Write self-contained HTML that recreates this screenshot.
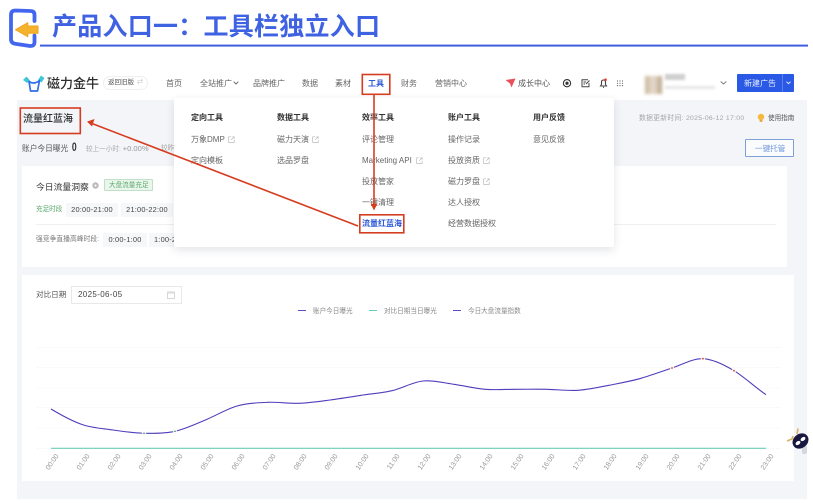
<!DOCTYPE html>
<html lang="zh">
<head>
<meta charset="utf-8">
<title>产品入口一：工具栏独立入口</title>
<style>
html,body{margin:0;padding:0;background:#fff}
#p{position:relative;width:813px;height:503px;overflow:hidden;background:#fff;font-family:"Liberation Sans","Noto Sans CJK SC",sans-serif;color:#444;filter:blur(.35px)}
#p>*{position:absolute}
.t{white-space:nowrap;line-height:12px;height:12px;font-size:8px;margin-top:1px}
.h{font-weight:700;color:#333}
.g{color:#666}
.pill{background:#f6f7f9;color:#444;font-size:7.4px;line-height:14px;height:14px;text-align:center;letter-spacing:.2px;border-radius:1px}
svg{overflow:visible}
.x{width:7px;height:7px}
</style>
</head>
<body>
<div id="p">
<svg style="width:0;height:0;left:0;top:0"><defs><symbol id="ext" viewBox="0 0 7 7"><path d="M3.2 .8H.6V6.4H6.2V3.8M3.2 3.8L6.2 .8M4.4 .8H6.2V2.6" fill="none" stroke="#bbb" stroke-width=".7"/></symbol></defs></svg>
<!-- header banner -->
<svg style="left:0;top:0" width="813" height="60" viewBox="0 0 813 60">
<path d="M34.5 21 V15 Q34.5 11 30.5 11 L15.5 10.5 Q11 10.5 11 15 L11 39 Q11 43 15 43.7 L30 46 Q34.5 46.3 34.5 42 V35.5" fill="none" stroke="#4366ee" stroke-width="3.8" stroke-linejoin="round" stroke-linecap="round"/>
<path d="M15.5 29.7 L27.8 22.7 L27.8 26 L38 26 L38 33.3 L27.8 33.3 L27.8 36.7 Z" fill="#f5b22c" stroke="#f0a41e" stroke-width="1" stroke-linejoin="round"/>
<rect x="40" y="44.6" width="768" height="2" fill="#3f5ddf"/>
</svg>
<div style="left:52px;top:11px;font-size:25px;line-height:32px;font-weight:700;color:#3f62e2;letter-spacing:.25px;white-space:nowrap">产品入口一：工具栏独立入口</div>

<!-- grey page area -->
<div style="left:17px;top:100px;width:790px;height:399px;background:#f3f5f8"></div>

<!-- nav logo -->
<svg style="left:22px;top:74px" width="24" height="20" viewBox="0 0 24 20">
<path d="M1 6 L4.5 2.5 L8 6.5 L5 9 Z" fill="#3fc7d8"/>
<path d="M22.5 4 L19 1.5 L16 6 L19.5 8.5 Z" fill="#3fc7d8"/>
<path d="M7 7.5 Q12 11 17.5 6.5 L15.5 17 L8.5 17 Z" fill="none" stroke="#2f6fe8" stroke-width="1.7" stroke-linejoin="round"/>
</svg>
<div class="t" style="left:47px;top:75px;font-size:13px;line-height:15px;height:15px;font-weight:500;color:#2d2d2d">磁力金牛</div>
<div style="left:103px;top:76px;width:45px;height:14px;border:.7px solid #efefef;border-radius:8px;box-sizing:border-box"></div>
<div class="t" style="left:108px;top:76px;font-size:6.5px;color:#555">返回旧版</div>
<div class="t" style="left:137px;top:76px;font-size:6px;color:#bbb">⇄</div>

<div class="t g" style="left:166px;top:77px">首页</div>
<div class="t g" style="left:200px;top:77px">全站推广</div>
<svg style="left:233px;top:81px" width="6" height="4"><path d="M.7 .7 L3 3 L5.3 .7" fill="none" stroke="#555" stroke-width=".8"/></svg>
<div class="t g" style="left:253px;top:77px">品牌推广</div>
<div class="t g" style="left:302px;top:77px">数据</div>
<div class="t g" style="left:335px;top:77px">素材</div>
<div class="t" style="left:368px;top:77px;color:#2f5bd8;font-weight:700">工具</div>
<div class="t g" style="left:401px;top:77px">财务</div>
<div class="t g" style="left:435px;top:77px">营销中心</div>

<svg style="left:505px;top:78px" width="11" height="10" viewBox="0 0 11 10"><path d="M.5 2 L10.5 .5 L6.5 9.5 L5 5.5 Z" fill="#e8505b"/></svg>
<div class="t" style="left:518px;top:77px;color:#555">成长中心</div>
<svg style="left:562px;top:78px" width="64" height="11" viewBox="0 0 64 11">
<circle cx="5" cy="5.2" r="3.6" fill="none" stroke="#333" stroke-width="1.1"/><circle cx="5" cy="5.2" r="1.6" fill="#333"/>
<path d="M26 1.8 H20 V8.8 H27 V5 M24 6 L27.5 2.5 M21.5 4 H24 M21.5 6 H23" fill="none" stroke="#444" stroke-width="1"/>
<path d="M38.5 8 H44.5 L43.5 6.5 V4 Q43.5 2 41.5 2 Q39.5 2 39.5 4 V6.5 Z M41 9.3 H42" fill="none" stroke="#444" stroke-width="1.1"/><circle cx="43.5" cy="1.7" r="1.3" fill="#e8392f"/>
<g fill="#666"><circle cx="55.5" cy="3" r=".6"/><circle cx="58" cy="3" r=".6"/><circle cx="60.5" cy="3" r=".6"/><circle cx="55.5" cy="5.3" r=".6"/><circle cx="58" cy="5.3" r=".6"/><circle cx="60.5" cy="5.3" r=".6"/><circle cx="55.5" cy="7.6" r=".6"/><circle cx="58" cy="7.6" r=".6"/><circle cx="60.5" cy="7.6" r=".6"/></g>
</svg>
<!-- blurred account -->
<div style="left:645px;top:76px;width:17px;height:18px;background:linear-gradient(90deg,#c9b69b,#e6dccd 50%,#b9a386);filter:blur(1.6px)"></div>
<div style="left:665px;top:74px;width:20px;height:6px;background:#cfcfcf;filter:blur(1.4px)"></div>
<div style="left:665px;top:86px;width:50px;height:3px;background:#e6e6e6;filter:blur(1.2px)"></div>
<svg style="left:720px;top:81px" width="7" height="4"><path d="M.7 .5 L3.5 3 L6.3 .5" fill="none" stroke="#777" stroke-width=".9"/></svg>
<div style="left:737px;top:74px;width:57px;height:18px;background:#2a59e6;border-radius:1px"></div>
<div style="left:782px;top:74px;width:.7px;height:18px;background:#5a7eec"></div>
<div class="t" style="left:744px;top:77px;color:#e9efff">新建广告</div>
<svg style="left:786px;top:81px" width="5" height="4"><path d="M.5 .7 L2.5 2.7 L4.5 .7" fill="none" stroke="#fff" stroke-width=".8"/></svg>

<!-- page head -->
<div class="t" style="left:23px;top:112px;font-size:10px;line-height:13px;height:13px;font-weight:500;color:#2c2c2c">流量红蓝海</div>
<div class="t" style="left:22px;top:142px;font-size:7.7px;color:#555">账户今日曝光</div>
<div class="t" style="left:71px;top:139px;font-size:12px;line-height:14px;height:14px;font-weight:700;color:#333;transform:scaleX(.72)">0</div>
<div class="t" style="left:86px;top:142px;font-size:6.6px;color:#aaa">较上一小时: <span style="font-size:7.6px;color:#999">+0.00%</span></div>
<div class="t" style="left:161px;top:142px;font-size:6.6px;color:#aaa">较昨</div>
<div class="t" style="left:639px;top:112px;font-size:6.8px;color:#a5a5a5;letter-spacing:.3px">数据更新时间: 2025-06-12 17:00</div>
<svg style="left:757px;top:113px" width="8" height="10" viewBox="0 0 8 10"><circle cx="4" cy="4" r="3.2" fill="#f5b93c"/><rect x="2.6" y="7" width="2.8" height="1.8" fill="#e4a42c"/></svg>
<div class="t" style="left:768px;top:112px;font-size:6.6px;color:#555">使用指南</div>
<div style="left:745px;top:139px;width:49px;height:18px;box-sizing:border-box;border:.8px solid #7fa0d8;background:#fafbfd;border-radius:1px"></div>
<div class="t" style="left:755px;top:142px;color:#6f95dc;font-size:7.6px">一键托管</div>

<!-- card 1 -->
<div style="left:22px;top:166px;width:765px;height:101px;background:#fff"></div>
<div class="t" style="left:36px;top:180px;font-size:8.8px;color:#333">今日流量洞察</div>
<svg style="left:92px;top:182px" width="7" height="7"><circle cx="3.5" cy="3.5" r="3.2" fill="#bbb"/><circle cx="3.5" cy="3.5" r="1" fill="#fff"/></svg>
<div style="left:104px;top:179px;width:49px;height:12px;box-sizing:border-box;border:.7px solid #bfe0c6;background:#eaf6ec;border-radius:1px"></div>
<div class="t" style="left:109px;top:178.5px;font-size:6.6px;color:#5aa96c">大盘流量充足</div>
<div class="t" style="left:36px;top:203px;font-size:6.6px;color:#55a868">充足时段</div>
<div class="pill" style="left:66px;top:203px;width:52px">20:00-21:00</div>
<div class="pill" style="left:121px;top:203px;width:52px">21:00-22:00</div>
<div style="left:36px;top:224px;width:740px;height:.7px;background:#f0f0f0"></div>
<div class="t" style="left:36px;top:233px;font-size:6.8px;color:#777">强竞争直播高峰时段:</div>
<div class="pill" style="left:103px;top:233px;width:44px">0:00-1:00</div>
<div class="pill" style="left:149px;top:233px;width:44px;text-align:left;padding-left:5px;box-sizing:border-box">1:00-2:00</div>

<!-- card 2 -->
<div style="left:22px;top:275px;width:772px;height:206px;background:#fff"></div>
<div class="t" style="left:36px;top:288px;font-size:7.6px;color:#555">对比日期</div>
<div style="left:71px;top:286px;width:111px;height:18px;box-sizing:border-box;border:.8px solid #e8e8e8;background:#fff"></div>
<div class="t" style="left:78px;top:288px;font-size:8px;color:#444;letter-spacing:.35px">2025-06-05</div>
<svg style="left:167px;top:291px" width="8" height="8"><rect x=".5" y="1" width="7" height="6.5" fill="none" stroke="#ccc" stroke-width=".8"/><rect x=".5" y="1" width="7" height="1.6" fill="#ddd"/></svg>
<div style="left:298px;top:310px;width:8px;height:1.2px;background:#5a4fc0"></div>
<div class="t" style="left:313px;top:304.5px;font-size:6.6px;color:#888">账户今日曝光</div>
<div style="left:369px;top:310px;width:8px;height:1.2px;background:#66cdb8"></div>
<div class="t" style="left:384px;top:304.5px;font-size:6.6px;color:#888">对比日期当日曝光</div>
<div style="left:453px;top:310px;width:8px;height:1.2px;background:#5a4fc0"></div>
<div class="t" style="left:468px;top:304.5px;font-size:6.6px;color:#888">今日大盘流量指数</div>

<svg style="left:0;top:0" width="813" height="503" viewBox="0 0 813 503">
<g stroke="#f6f6f6" stroke-width=".8" stroke-dasharray="3 1">
<path d="M36 347.5H781M36 367.5H781M36 388H781M36 407.5H781M36 428H781M36 448.5H781"/>
</g>
<path d="M51 448.3H766" stroke="#6fcdb8" stroke-width="1.1"/>
<path fill="none" stroke="#4f3dbb" stroke-width="1.1" d="M51 409 C61 415 72 421 82 424.5 S103 428.5 113 430 S134 433.1 144 433.3 S165 433.6 175 431.3 S196 423.9 206 419.7 S227 408.9 237 406 S258 402.75 268 402.3 S289 403.7 299 403.3 S320 401.3 330 400 S351 396.9 361 395.3 S382 393.1 392 390.7 S413 382 423 381 S444 382.9 454 384.3 S475 388.5 485 389.3 S506 389.3 516 389.3 S537 389.1 547 389.3 S568 391 578 390.3 S599 387.3 609 385.3 S631 381.2 641 378.3 S662 371.3 672 368 S693 358.25 703 358.7 S724 364.7 734 370.7 S756 388 766 394.7"/>
<g fill="#fff" opacity=".85"><circle cx="144" cy="433.3" r="2.2"/><circle cx="175" cy="431.3" r="2.2"/><circle cx="672" cy="368" r="2.2"/><circle cx="703" cy="358.7" r="2.2"/><circle cx="734" cy="370.7" r="2.2"/></g>
<g fill="#3f8f5a"><circle cx="144" cy="433.3" r=".8"/><circle cx="175" cy="431.3" r=".8"/></g>
<g fill="#d9472f"><circle cx="672" cy="368" r=".9"/><circle cx="703" cy="358.7" r=".9"/><circle cx="734" cy="370.7" r=".9"/></g>
<g font-family="Liberation Sans, sans-serif" font-size="7" fill="#999" text-anchor="end">
<text transform="translate(59 456) rotate(-55)">00:00</text>
<text transform="translate(90 456) rotate(-55)">01:00</text>
<text transform="translate(121 456) rotate(-55)">02:00</text>
<text transform="translate(152 456) rotate(-55)">03:00</text>
<text transform="translate(183 456) rotate(-55)">04:00</text>
<text transform="translate(214 456) rotate(-55)">05:00</text>
<text transform="translate(245 456) rotate(-55)">06:00</text>
<text transform="translate(276 456) rotate(-55)">07:00</text>
<text transform="translate(307 456) rotate(-55)">08:00</text>
<text transform="translate(338 456) rotate(-55)">09:00</text>
<text transform="translate(369 456) rotate(-55)">10:00</text>
<text transform="translate(400 456) rotate(-55)">11:00</text>
<text transform="translate(431 456) rotate(-55)">12:00</text>
<text transform="translate(462 456) rotate(-55)">13:00</text>
<text transform="translate(493 456) rotate(-55)">14:00</text>
<text transform="translate(524 456) rotate(-55)">15:00</text>
<text transform="translate(555 456) rotate(-55)">16:00</text>
<text transform="translate(586 456) rotate(-55)">17:00</text>
<text transform="translate(617 456) rotate(-55)">18:00</text>
<text transform="translate(649 456) rotate(-55)">19:00</text>
<text transform="translate(680 456) rotate(-55)">20:00</text>
<text transform="translate(711 456) rotate(-55)">21:00</text>
<text transform="translate(742 456) rotate(-55)">22:00</text>
<text transform="translate(774 456) rotate(-55)">23:00</text>
</g>
</svg>

<!-- dropdown -->
<div style="left:174px;top:98px;width:440px;height:149px;background:#fff;border-radius:2px;box-shadow:0 3px 9px rgba(40,50,70,.13)"></div>
<div class="t h" style="left:191px;top:111px">定向工具</div>
<div class="t h" style="left:277px;top:111px">数据工具</div>
<div class="t h" style="left:362px;top:111px">效率工具</div>
<div class="t h" style="left:448px;top:111px">账户工具</div>
<div class="t h" style="left:533px;top:111px">用户反馈</div>
<div class="t g" style="left:191px;top:132.5px">万象DMP</div><svg class="x" style="left:227.5px;top:135.5px"><use href="#ext"/></svg>
<div class="t g" style="left:191px;top:153.5px">定向模板</div>
<div class="t g" style="left:277px;top:132.5px">磁力天演</div><svg class="x" style="left:311.5px;top:135.5px"><use href="#ext"/></svg>
<div class="t g" style="left:277px;top:153.5px">选品罗盘</div>
<div class="t g" style="left:362px;top:132.5px">评论管理</div>
<div class="t g" style="left:362px;top:153.5px">Marketing API</div><svg class="x" style="left:415.5px;top:156.5px"><use href="#ext"/></svg>
<div class="t g" style="left:362px;top:174.5px">投放管家</div>
<div class="t g" style="left:362px;top:195.5px">一键清理</div>
<div class="t" style="left:362px;top:216.5px;color:#2f5bd8;font-weight:700">流量红蓝海</div>
<div class="t g" style="left:448px;top:132.5px">操作记录</div>
<div class="t g" style="left:448px;top:153.5px">投放资质</div><svg class="x" style="left:482.5px;top:156.5px"><use href="#ext"/></svg>
<div class="t g" style="left:448px;top:174.5px">磁力罗盘</div><svg class="x" style="left:482.5px;top:177.5px"><use href="#ext"/></svg>
<div class="t g" style="left:448px;top:195.5px">达人授权</div>
<div class="t g" style="left:448px;top:216.5px">经营数据授权</div>
<div class="t g" style="left:533px;top:132.5px">意见反馈</div>

<!-- red annotations -->
<svg style="left:0;top:0" width="813" height="503" viewBox="0 0 813 503">
<g fill="none" stroke="#d63d20" stroke-width="1.6">
<rect x="362.3" y="74.5" width="27.5" height="19.8"/>
<rect x="20.3" y="108" width="60" height="25.5"/>
<rect x="359.8" y="214.8" width="44" height="18"/>
<path d="M374 94.5V205"/>
<path d="M358 226 L92 123.5"/>
</g>
<path d="M374 210.5 L370.6 203.8 L377.4 203.8 Z" fill="#d63d20"/>
<path d="M87 121.6 L94.5 119 L92 126.5 Z" fill="#d63d20"/>
</svg>

<!-- mascot -->
<svg style="left:785px;top:426px" width="24" height="32" viewBox="0 0 24 32">
<path d="M2 15 L7 13 L8 10 M13 2.5 L12 8" fill="none" stroke="#d9b36a" stroke-width="1.7"/>
<rect x="17" y="20" width="5" height="8" rx="2" fill="#d4d7dc"/>
<ellipse cx="15.5" cy="15" rx="8.5" ry="7" transform="rotate(-38 15.5 15)" fill="#17173f"/>
<ellipse cx="13" cy="17" rx="1.8" ry="2.7" transform="rotate(52 13 17)" fill="#fff"/>
<ellipse cx="18" cy="13" rx="1.8" ry="2.7" transform="rotate(52 18 13)" fill="#fff"/>
</svg>
</div>
</body>
</html>
